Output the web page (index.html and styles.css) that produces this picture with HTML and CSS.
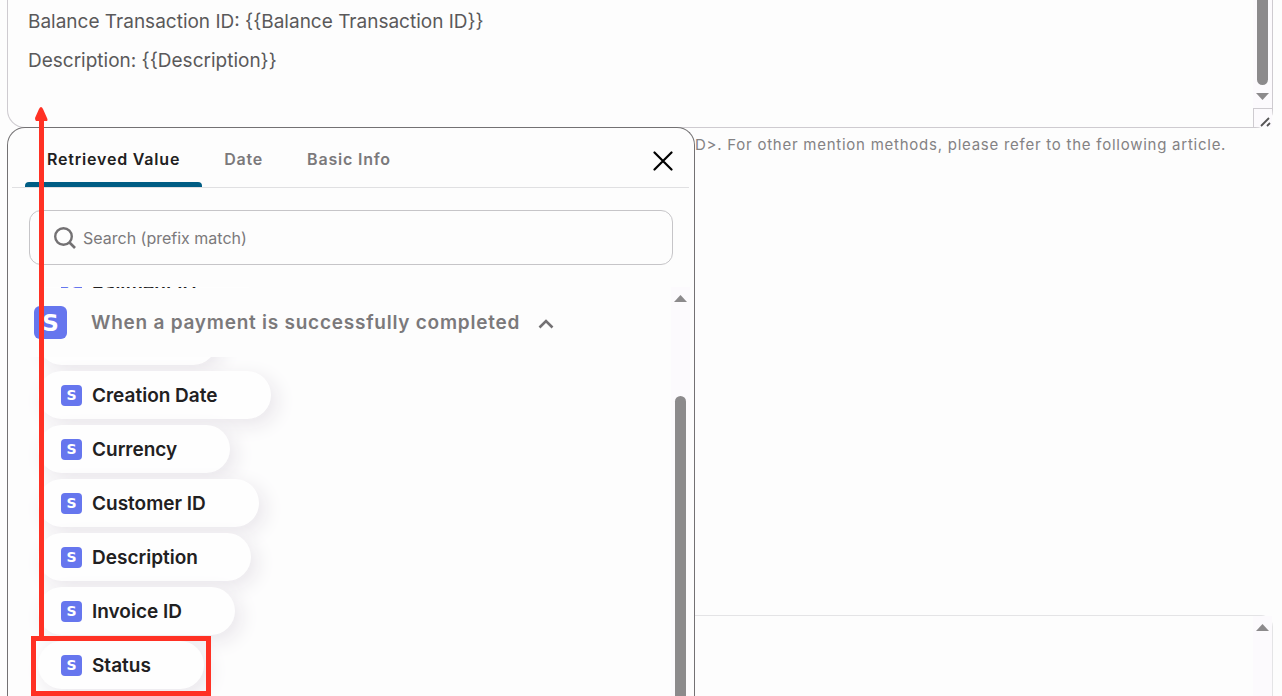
FILE: index.html
```html
<!DOCTYPE html>
<html lang="en">
<head>
	<meta charset="UTF-8">
	<title>Message</title>
	<link rel="stylesheet" href="styles.css">
</head>
<body>
	<svg width="0" height="0" class="defs">
		<symbol id="up" viewBox="0 0 13 7"><path d="M0 7 6.5 0 13 7z" fill="#8c8a8c"/></symbol>
	</svg>
	<main class="page">
		<!-- message body -->
		<div class="composer">
			<textarea class="composer-text" aria-label="Message" spellcheck="false">Balance Transaction ID: {{Balance Transaction ID}}
Description: {{Description}}</textarea>
			<div class="scroll scroll-message">
				<span class="thumb"></span>
				<svg class="arrow arrow-down"><use href="#up"/></svg>
				<svg class="grip" viewBox="0 0 18 18"><path d="M7 17 15 9M13 17l3-3" stroke="#555" stroke-width="1.800" fill="none"/></svg>
			</div>
		</div>

		<div class="below">
			<p class="help">D&gt;. For other mention methods, please refer to the following article.</p>
			<div class="next-field">
				<div class="scroll">
					<svg class="arrow"><use href="#up"/></svg>
				</div>
			</div>

			<!-- value picker -->
			<section class="picker">
				<nav class="tabs">
					<button type="button" class="tab active">Retrieved Value</button>
					<button type="button" class="tab">Date</button>
					<button type="button" class="tab">Basic Info</button>
					<button type="button" class="close" aria-label="Close">
						<svg viewBox="0 0 20 20" width="20" height="20"><path d="M1.500 1.500 18.500 18.500M18.500 1.500 1.500 18.500" stroke="#000" stroke-width="2.200" stroke-linecap="round"/></svg>
					</button>
				</nav>
				<label class="search">
					<svg viewBox="0 0 22 22" width="22" height="22"><circle cx="9.500" cy="9.500" r="8.300" fill="none" stroke="#737173" stroke-width="2.400"/><path d="m15.500 15.500 5.500 5.500" stroke="#737173" stroke-width="2.600"/></svg>
					<input type="text" placeholder="Search (prefix match)" aria-label="Search">
				</label>
				<div class="results">
					<div class="values">
						<div class="slice">
							<button type="button" class="chip"><span class="logo">S</span>Payment ID</button>
						</div>
						<button type="button" class="group">
							<span class="logo logo-big">S</span>
							When a payment is successfully completed
							<svg viewBox="0 0 16 10" width="16" height="10"><path d="m1.500 8.500 6.500-6.500 6.500 6.500" fill="none" stroke="#737173" stroke-width="2.600"/></svg>
						</button>
						<div class="chips">
							<button type="button" class="chip"><span class="logo">S</span>Amount</button>
							<button type="button" class="chip"><span class="logo">S</span>Creation Date</button>
							<button type="button" class="chip"><span class="logo">S</span>Currency</button>
							<button type="button" class="chip"><span class="logo">S</span>Customer ID</button>
							<button type="button" class="chip"><span class="logo">S</span>Description</button>
							<button type="button" class="chip"><span class="logo">S</span>Invoice ID</button>
							<button type="button" class="chip"><span class="logo">S</span>Status</button>
						</div>
					</div>
					<div class="scroll scroll-values">
						<svg class="arrow"><use href="#up"/></svg>
						<span class="thumb"></span>
					</div>
				</div>
			</section>
		</div>

		<!-- callout: status goes into the message -->
		<div class="callout-box"></div>
		<svg class="callout-arrow" viewBox="0 0 14 530" width="14" height="530"><path d="M4 530V14H1Q0 13 0 11L4 2Q6-2 8 2L12 11Q13 13 12 14H9V530z" fill="#ff3124"/></svg>
	</main>
</body>
</html>
```
FILE: styles.css
```css
* {
	box-sizing: border-box;
}

body {
	margin: 0;
	background-color: #fdfdfd;
	font-family: Inter, "Liberation Sans", sans-serif;
	overflow: hidden;
}

button,
input,
textarea {
	font-family: inherit;
	border: none;
	background: none;
	padding: 0;
}

.defs {
	position: absolute;
}

.page {
	position: relative;
	display: flex;
	flex-direction: column;
	height: 100vh;
	padding: 0 9px 0 7px;
}

.composer {
	display: flex;
	border: 1px solid #cecbd0;
	border-top: none;
	border-radius: 0 0 18px 18px;
}

.composer-text {
	flex: 1;
	height: 127px;
	padding: 2px 20px;
	font-size: 19px;
	line-height: 39px;
	color: #5a595a;
	resize: none;
	overflow: hidden;
	outline: none;
}

.scroll {
	display: flex;
	flex-direction: column;
	align-items: center;
	width: 19px;
	background-color: #fcfafd;
}

.scroll .thumb {
	width: 11px;
	background-color: #8c8a8c;
}

.arrow {
	width: 13px;
	height: 7px;
}

.arrow-down {
	transform: rotate(180deg);
}

.scroll-message .thumb {
	height: 85px;
	margin-bottom: 8px;
	border-radius: 0 0 6px 6px;
}

.grip {
	width: 19px;
	height: 19px;
	margin-top: 8px;
	border: 1px solid #cecbd0;
	border-width: 1px 0 0 1px;
}

.below {
	position: relative;
	flex: 1;
	display: flex;
	flex-direction: column;
}

.help {
	margin: 0 0 0 688px;
	height: 487px;
	padding-top: 5px;
	font-size: 15px;
	line-height: 24px;
	letter-spacing: 0.05em;
	color: #848284;
	white-space: nowrap;
}

.next-field {
	flex: 1;
	display: flex;
	justify-content: flex-end;
	border: 1px solid #e4e4e6;
	border-bottom: none;
	border-radius: 12px 12px 0 0;
}

.next-field .scroll {
	padding-top: 8px;
}

.picker {
	position: absolute;
	top: -1px;
	bottom: 0;
	left: 0;
	width: 688px;
	display: flex;
	flex-direction: column;
	background-color: #fdfdfd;
	border: 1px solid #737173;
	border-bottom: none;
	border-radius: 18px 18px 0 0;
}

.tabs {
	display: flex;
	height: 60px;
	margin: 0 5px 0 4px;
	padding-left: 13px;
	border-bottom: 1px solid #e0e0e2;
}

.tab {
	position: relative;
	padding: 2px 22px 0;
	font-size: 16px;
	font-weight: 600;
	letter-spacing: 0.05em;
	color: #7b797b;
}

.tab.active {
	color: #212021;
}

.tab.active::after {
	content: "";
	position: absolute;
	left: 0;
	right: 0;
	bottom: 0;
	height: 5px;
	border-radius: 4px 4px 0 0;
	background-color: #005d84;
}

.close {
	display: flex;
	align-items: center;
	margin-left: auto;
	margin-right: 16px;
	padding-top: 6px;
}

.search {
	display: flex;
	align-items: center;
	gap: 7px;
	height: 55px;
	margin: 22px 21px;
	padding: 0 24px;
	border: 1px solid #c6c5c8;
	border-radius: 12px;
}

.search input {
	flex: 1;
	font-size: 16px;
	outline: none;
}

.search input::placeholder {
	color: #7b797b;
}

.results {
	flex: 1;
	display: flex;
	min-height: 0;
}

.values {
	flex: 1;
	display: flex;
	flex-direction: column;
	overflow: hidden;
}

.slice {
	display: flex;
	flex: none;
	align-items: center;
	height: 1px;
	padding-left: 30px;
	overflow: hidden;
}

.slice .chip {
	box-shadow: none;
}

.group {
	display: flex;
	flex: none;
	align-items: center;
	height: 69px;
	padding-left: 26px;
	font-size: 19px;
	font-weight: 600;
	letter-spacing: 0.04em;
	color: #7b797b;
}

.group svg {
	margin: 2px 0 0 18px;
}

.logo {
	display: flex;
	align-items: center;
	justify-content: center;
	width: 21px;
	height: 21px;
	margin-right: 10px;
	border-radius: 4px;
	background-color: #6676ee;
	color: #fff;
	font-family: "DejaVu Sans", sans-serif;
	font-size: 14px;
	font-weight: 700;
	line-height: 20px;
	letter-spacing: 0;
}

.logo-big {
	width: 33px;
	height: 33px;
	margin-right: 24px;
	border-radius: 6px;
	font-size: 23px;
}

.chips {
	flex: 1;
	display: flex;
	flex-direction: column;
	justify-content: flex-end;
	align-items: flex-start;
	gap: 6px;
	padding: 0 0 7px 30px;
	overflow: hidden;
}

.chip {
	display: flex;
	flex: none;
	align-items: center;
	height: 48px;
	padding: 0 53px 0 23px;
	border-radius: 24px;
	background-color: #fefefe;
	box-shadow: 6px 6px 20px #e9e6eb;
	font-size: 19px;
	font-weight: 600;
	color: #212021;
}

.scroll-values {
	margin-right: 4px;
	padding-top: 8px;
}

.scroll-values .thumb {
	flex: 1;
	margin-top: 94px;
	border-radius: 6px 6px 0 0;
}

.callout-box {
	position: absolute;
	top: 636px;
	left: 31px;
	width: 180px;
	height: 60px;
	border: 5px solid #ff3124;
}

.callout-arrow {
	position: absolute;
	top: 107px;
	left: 35px;
}
```
